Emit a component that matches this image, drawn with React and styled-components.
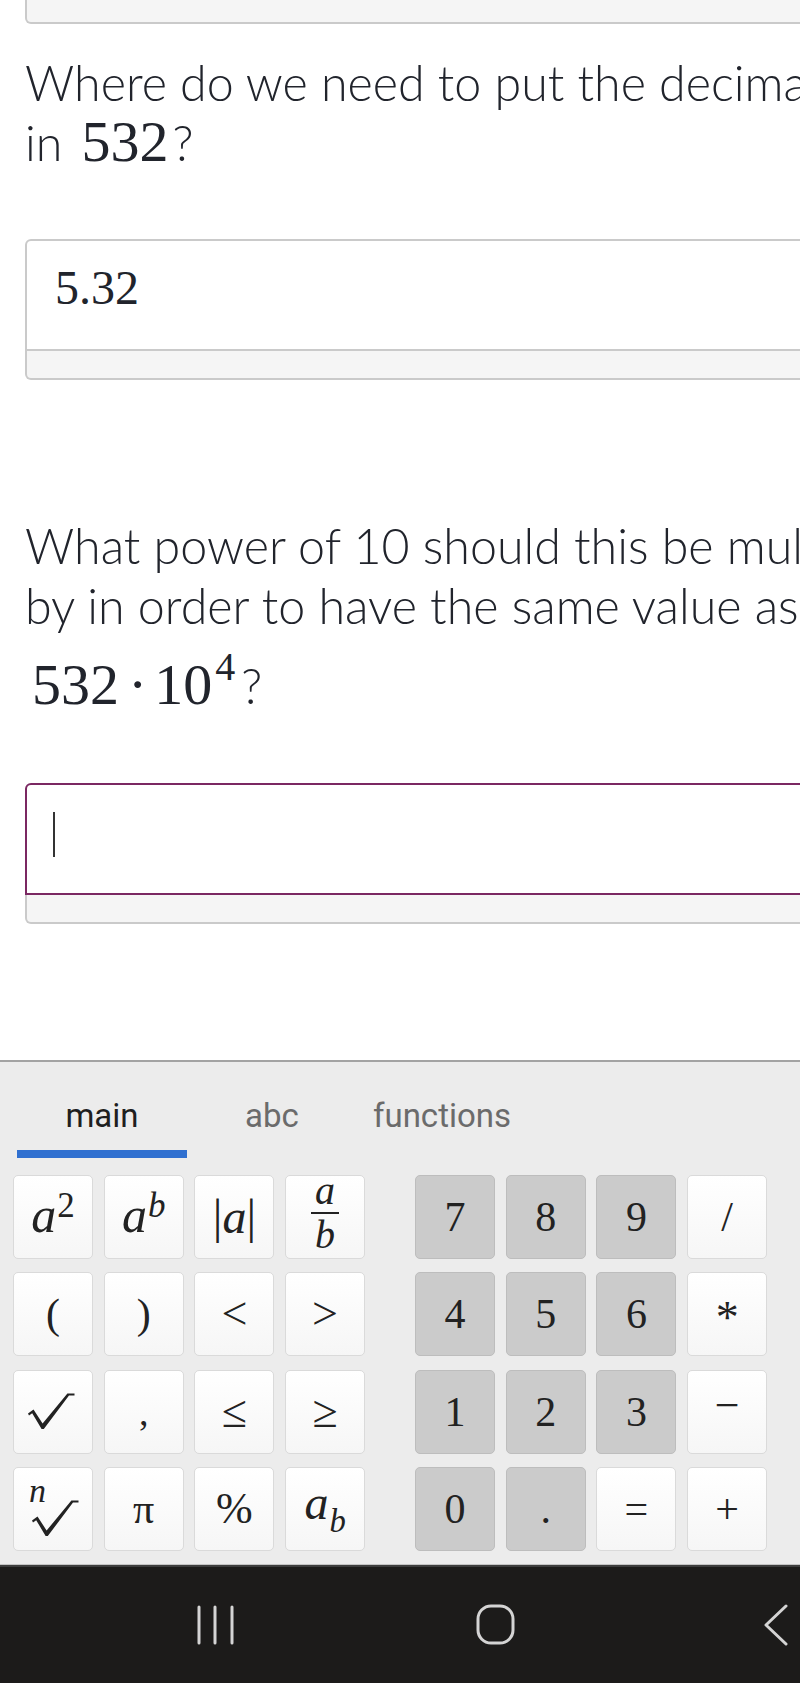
import styled, { createGlobalStyle } from "styled-components";

const GlobalStyle = createGlobalStyle`
  html, body {
    margin: 0;
    padding: 0;
    background: #fff;
  }
  body {
    width: 800px;
    height: 1683px;
    overflow: hidden;
  }
  * {
    box-sizing: border-box;
  }
`;

const Page = styled.div`
  width: 800px;
  height: 1683px;
  display: flex;
  flex-direction: column;
  overflow: hidden;
  background: #fff;
`;

const Content = styled.main`
  flex: 1;
  padding-left: 25px;
  overflow: hidden;
`;

const PrevFooter = styled.div`
  width: 900px;
  height: 24px;
  background: #f5f5f5;
  border: 2px solid #cacaca;
  border-top: none;
  border-radius: 0 0 6px 6px;
`;

const Question = styled.div`
  margin-top: ${(p) => p.$top}px;
  font-family: Lato, "Noto Sans", sans-serif;
  font-weight: 300;
  font-size: 48.4px;
  line-height: 60px;
  color: #21242c;
  white-space: nowrap;
`;

const Math = styled.span`
  margin-left: 6px;
  font-family: "Liberation Serif", serif;
  font-weight: 400;
  font-size: 58px;
  color: #21242c;
`;

const MathRow = styled.div`
  margin-top: 20px;
  padding-left: 7px;
  font-family: "Liberation Serif", serif;
  font-size: 58px;
  line-height: 60px;
  color: #21242c;
  white-space: nowrap;
`;

const Dot = styled.span`
  margin: 0 7px 0 9px;
`;

const Power = styled.span`
  margin-left: 3px;
  font-size: 40px;
  line-height: 0;
  vertical-align: 24px;
`;

const Mark = styled.span`
  font-family: Lato, "Noto Sans", sans-serif;
  font-weight: 300;
  font-size: 48.4px;
  margin-left: ${(p) => p.$gap || 0}px;
`;

const AnswerBox = styled.div`
  margin-top: ${(p) => p.$top}px;
  width: 900px;
`;

const InputArea = styled.div`
  height: 112px;
  border: 2px solid ${(p) => (p.$focused ? "#7b2862" : "#cacaca")};
  border-radius: 6px 6px 0 0;
  padding: 23px 0 0 28px;
  background: #fff;
  font-family: "Liberation Serif", serif;
  font-size: 48px;
  line-height: 1;
  color: #21242c;
`;

const AnswerFooter = styled.div`
  height: 29px;
  background: #f5f5f5;
  border: 2px solid #cacaca;
  border-top: none;
  border-radius: 0 0 6px 6px;
`;

const Cursor = styled.span`
  display: block;
  width: 2px;
  height: 45px;
  margin: 4px 0 0 -2px;
  background: #333;
`;

const Keyboard = styled.section`
  flex-shrink: 0;
  height: 505px;
  background: #ececec;
  border-top: 2px solid #a3a3a3;
  border-bottom: 1px solid #c4c4c4;
`;

const Tabs = styled.div`
  display: flex;
  padding-left: 17px;
`;

const Tab = styled.div`
  width: 170px;
  height: 96px;
  padding-top: 37px;
  text-align: center;
  font-family: Roboto, "Noto Sans", sans-serif;
  font-size: 33px;
  line-height: 33px;
  color: ${(p) => (p.$active ? "#1f1f1f" : "#6b6b6b")};
  border-bottom: 8px solid ${(p) => (p.$active ? "#3070d0" : "transparent")};
`;

const KeysArea = styled.div`
  display: flex;
  gap: 50px;
  padding: 17px 0 0 13px;
`;

const KeyGrid = styled.div`
  display: grid;
  grid-template-columns: repeat(4, 80px);
  grid-auto-rows: 84px;
  column-gap: 10.7px;
  row-gap: 13.3px;
`;

const Key = styled.div`
  display: flex;
  align-items: center;
  justify-content: center;
  border-radius: 5px;
  font-family: "Liberation Serif", serif;
  font-size: ${(p) => p.$size || 42}px;
  line-height: 1;
  color: #222;
  background: ${(p) =>
    p.$tone === "dark" ? "#cbcbcb" : "linear-gradient(#ffffff, #f6f6f6)"};
  border: 1px solid ${(p) => (p.$tone === "dark" ? "#bdbdbd" : "#dadada")};
`;

const Label = styled.span`
  white-space: nowrap;
  transform: translate(${(p) => p.$dx || 0}px, ${(p) => p.$dy || 0}px);
`;

const Var = styled.i`
  font-family: "Liberation Serif", serif;
  font-style: italic;
`;

const Sup = styled.span`
  font-size: 0.7em;
  vertical-align: 0.42em;
  line-height: 0;
  margin-left: 1px;
`;

const Sub = styled.span`
  font-size: 0.68em;
  vertical-align: -0.4em;
  line-height: 0;
  margin-left: 1px;
`;

const Fraction = styled.span`
  display: inline-flex;
  flex-direction: column;
  align-items: center;
  vertical-align: middle;
  font-size: 40px;
  line-height: 30px;
`;

const FracBar = styled.span`
  width: 28px;
  height: 2px;
  background: #222;
  margin: 6px 0 6px;
`;

const RootStack = styled.span`
  display: flex;
  flex-direction: column;
  align-items: flex-start;
`;

const RootIndex = styled.i`
  font-size: 34px;
  line-height: 18px;
  margin-left: -2px;
`;

const NavBar = styled.nav`
  flex-shrink: 0;
  height: 118px;
  background: #1c1b1a;
  border-top: 2px solid #3d3d3d;
  display: flex;
  align-items: center;
  gap: 200.5px;
  padding-left: 175px;
`;

const NavButton = styled.div`
  width: 80px;
  flex-shrink: 0;
  display: flex;
  justify-content: center;
  align-items: center;
`;

const RadicalIcon = () => (
  <svg width="48" height="37" viewBox="0 0 48 37" style={{ display: "block" }}>
    <path
      d="M1 20.5 L6.5 16.5 L15.6 30.5 L40.4 0.6 L47.5 0.6 L47.5 2.6 L42 2.6 L16.8 36 L14.6 36 L5.2 20.2 L2 22.4 Z"
      fill="#222"
    />
  </svg>
);

const leftKeys = [
  { label: <><Var>a</Var><Sup>2</Sup></>, size: 50, dy: -2 },
  { label: <><Var>a</Var><Sup><Var>b</Var></Sup></>, size: 50, dy: -2 },
  { label: <>|<Var>a</Var>|</>, size: 48 },
  {
    label: (
      <Fraction>
        <Var>a</Var>
        <FracBar />
        <Var>b</Var>
      </Fraction>
    ),
    dy: -4,
  },
  { label: "(" },
  { label: ")" },
  { label: "<", size: 46 },
  { label: ">", size: 46 },
  { label: <RadicalIcon />, dx: -2 },
  { label: ",", size: 38 },
  { label: "≤", size: 46 },
  { label: "≥", size: 46 },
  {
    label: (
      <RootStack>
        <RootIndex>n</RootIndex>
        <RadicalIcon />
      </RootStack>
    ),
    dx: 2,
    dy: 1,
  },
  { label: "π", size: 42 },
  { label: "%", size: 44 },
  { label: <><Var>a</Var><Sub><Var>b</Var></Sub></>, size: 48, dy: -6 },
];

const rightKeys = [
  { label: "7", tone: "dark" },
  { label: "8", tone: "dark" },
  { label: "9", tone: "dark" },
  { label: "/" },
  { label: "4", tone: "dark" },
  { label: "5", tone: "dark" },
  { label: "6", tone: "dark" },
  { label: "*", size: 46, dy: 4 },
  { label: "1", tone: "dark" },
  { label: "2", tone: "dark" },
  { label: "3", tone: "dark" },
  { label: "−", size: 44, dy: -6 },
  { label: "0", tone: "dark" },
  { label: ".", tone: "dark" },
  { label: "=" },
  { label: "+" },
];

const RecentsIcon = () => (
  <svg width="40" height="40" viewBox="0 0 40 40">
    <g stroke="#d4d4d4" strokeWidth="3" strokeLinecap="round">
      <line x1="4" y1="2" x2="4" y2="38" />
      <line x1="20" y1="2" x2="20" y2="38" />
      <line x1="37" y1="2" x2="37" y2="38" />
    </g>
  </svg>
);

const HomeIcon = () => (
  <svg width="40" height="42" viewBox="0 0 40 42">
    <rect x="2" y="2" width="35" height="37" rx="13" fill="none" stroke="#d4d4d4" strokeWidth="3" />
  </svg>
);

const BackIcon = () => (
  <svg width="24" height="42" viewBox="0 0 24 42">
    <polyline
      points="22,2 2,21 22,40"
      fill="none"
      stroke="#d4d4d4"
      strokeWidth="3"
      strokeLinecap="round"
      strokeLinejoin="round"
    />
  </svg>
);

const KeyPad = ({ keys }) => (
  <KeyGrid>
    {keys.map((k, i) => (
      <Key key={i} $tone={k.tone} $size={k.size}>
        <Label $dx={k.dx} $dy={k.dy}>
          {k.label}
        </Label>
      </Key>
    ))}
  </KeyGrid>
);

export default function App() {
  return (
    <Page>
      <GlobalStyle />
      <Content>
        <PrevFooter />

        <Question $top={28}>
          Where do we need to put the decimal point
          <br />
          in <Math>532</Math>
          <Mark $gap={4}>?</Mark>
        </Question>

        <AnswerBox $top={67}>
          <InputArea>5.32</InputArea>
          <AnswerFooter />
        </AnswerBox>

        <Question $top={135}>
          What power of 10 should this be multiplied
          <br />
          by in order to have the same value as
        </Question>
        <MathRow>
          532<Dot>·</Dot>10<Power>4</Power>
          <Mark $gap={6}>?</Mark>
        </MathRow>

        <AnswerBox $top={68}>
          <InputArea $focused>
            <Cursor />
          </InputArea>
          <AnswerFooter />
        </AnswerBox>
      </Content>

      <Keyboard>
        <Tabs>
          <Tab $active>main</Tab>
          <Tab>abc</Tab>
          <Tab>functions</Tab>
        </Tabs>
        <KeysArea>
          <KeyPad keys={leftKeys} />
          <KeyPad keys={rightKeys} />
        </KeysArea>
      </Keyboard>

      <NavBar>
        <NavButton>
          <RecentsIcon />
        </NavButton>
        <NavButton>
          <HomeIcon />
        </NavButton>
        <NavButton>
          <BackIcon />
        </NavButton>
      </NavBar>
    </Page>
  );
}
